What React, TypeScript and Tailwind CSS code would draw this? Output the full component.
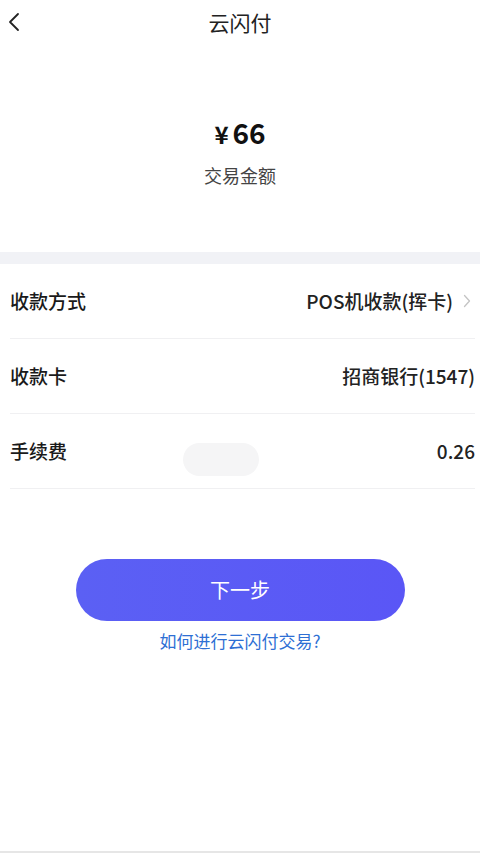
import React from 'react'

const font = { fontFamily: '"Noto Sans CJK SC", "Noto Sans", sans-serif' }

interface Row {
    label: string
    value: string
    arrow?: boolean
}

const rows: Row[] = [
    { label: '收款方式', value: 'POS机收款(挥卡)', arrow: true },
    { label: '收款卡', value: '招商银行(1547)' },
    { label: '手续费', value: '0.26' },
]

export default function App() {
    return (
        <div className="relative min-h-[853px] bg-white text-[#1a1a1a]" style={font}>
            {/* 顶部导航 */}
            <div className="relative flex h-[44px] items-center justify-center">
                <button className="absolute left-[4px] top-[10px] flex h-[24px] w-[20px] items-center justify-center">
                    <svg width="12" height="20" viewBox="0 0 12 20" fill="none">
                        <path d="M10 2L2 10l8 8" stroke="#222" strokeWidth="1.8" strokeLinecap="round" strokeLinejoin="round" />
                    </svg>
                </button>
                <span className="text-[21px] leading-none text-[#222]">云闪付</span>
            </div>

            {/* 金额 */}
            <div className="flex flex-col items-center pt-[74px]">
                <div className="flex items-baseline text-[28px] font-bold leading-none text-[#111]">
                    <span className="mr-[4px] text-[24px]">¥</span>
                    <span>66</span>
                </div>
                <div className="mt-[20px] text-[18px] leading-none text-[#444]">交易金额</div>
            </div>

            <div className="mt-[68px] h-[12px] bg-[#f1f2f6]" />

            {/* 收款信息 */}
            <div className="pl-[10px] pr-[5px]">
                {rows.map((row) => (
                    <div
                        key={row.label}
                        className="flex h-[75px] items-center justify-between border-b border-[#f0f0f2]"
                    >
                        <span className="text-[19px] font-medium text-[#1a1a1a]">{row.label}</span>
                        <div className="flex items-center gap-[10px]">
                            <span className="text-[19px] font-medium text-[#222]">{row.value}</span>
                            {row.arrow && (
                                <svg width="8" height="14" viewBox="0 0 8 14" fill="none" className="mr-[4px]">
                                    <path d="M1.5 1.5L6.5 7l-5 5.5" stroke="#c4c4c4" strokeWidth="1.3" strokeLinecap="round" strokeLinejoin="round" />
                                </svg>
                            )}
                        </div>
                    </div>
                ))}
            </div>

            {/* 提示残影 */}
            <div className="absolute left-[183px] top-[443px] h-[33px] w-[76px] rounded-full bg-[#f5f5f6]" />

            {/* 按钮 */}
            <div className="flex flex-col items-center pt-[70px]">
                <button className="h-[62px] w-[329px] rounded-full bg-gradient-to-r from-[#5b60f4] to-[#5a56f6] text-[20px] text-white">
                    下一步
                </button>
                <a className="mt-[11px] text-[17px] leading-none text-[#2e6fd4]">如何进行云闪付交易?</a>
            </div>

            <div className="absolute bottom-0 left-0 right-0 h-[2px] bg-[#e6e6e6]" />
        </div>
    )
}
